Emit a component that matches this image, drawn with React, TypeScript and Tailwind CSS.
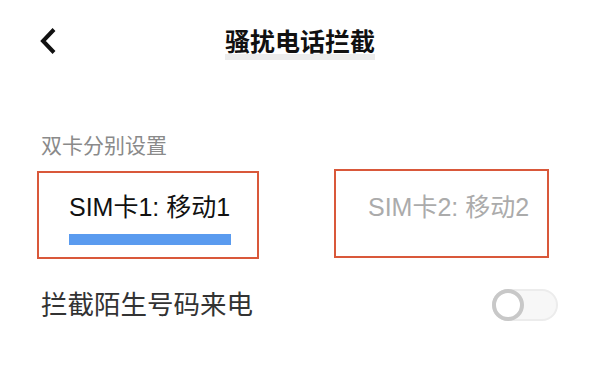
import React from 'react';

const SimTab = ({ label, active }: { label: string; active: boolean }) => (
  <div
    className={
      active
        ? 'mt-[2px] h-[88px] w-[222px] border-2 border-[#d9583a] pl-[30px] pt-[22px]'
        : 'ml-[75px] h-[89px] w-[215px] border-2 border-[#d9583a] pl-[32px] pt-[24px]'
    }
  >
    <div
      className={
        active
          ? 'text-[25px] leading-[25px] whitespace-nowrap text-[#111]'
          : 'text-[25px] leading-[25px] whitespace-nowrap text-[#ababab]'
      }
    >
      {label}
    </div>
    {active && <div className="mt-[14px] h-[11px] w-[162px] bg-[#5a9bef]" />}
  </div>
);

const Toggle = () => (
  <div className="relative h-[32px] w-[66px] rounded-full border-2 border-[#ececec] bg-[#f7f7f7]">
    <div className="absolute -left-[2px] -top-[2px] h-[32px] w-[32px] rounded-full border-[4px] border-[#c8c8c8] bg-white" />
  </div>
);

export default function App() {
  return (
    <div className="h-[370px] w-[600px] overflow-hidden bg-white font-['Liberation_Sans','Noto_Sans_CJK_SC',sans-serif]">
      {/* header */}
      <div className="grid h-[84px] grid-cols-[1fr_auto_1fr] items-start px-[40px] pt-[28px]">
        <svg width="16" height="26" viewBox="0 0 16 26" fill="none">
          <polyline
            points="14,1.5 3,13 14,24.5"
            stroke="#111"
            strokeWidth="4"
            strokeLinejoin="miter"
          />
        </svg>
        <span className="mt-[2px] bg-[linear-gradient(transparent_0_24px,#ececec_24px)] pb-[5px] text-[25px] font-bold leading-[25px] text-[#111]">
          骚扰电话拦截
        </span>
        <div />
      </div>

      <div className="mt-[51px] px-[41px] text-[21px] leading-[21px] text-[#8a8a8a]">双卡分别设置</div>

      <div className="mt-[13px] flex items-start pl-[37px]">
        <SimTab label="SIM卡1: 移动1" active />
        <SimTab label="SIM卡2: 移动2" active={false} />
      </div>

      <div className="mt-[16px] flex h-[60px] items-center justify-between pl-[41px] pr-[42px]">
        <span className="text-[26.5px] leading-[27px] text-[#333]">拦截陌生号码来电</span>
        <Toggle />
      </div>
    </div>
  );
}
